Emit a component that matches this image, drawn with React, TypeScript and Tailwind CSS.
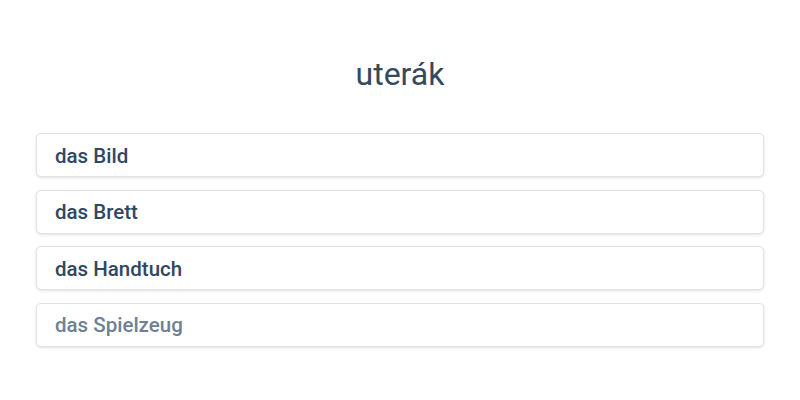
const options = ["das Bild", "das Brett", "das Handtuch", "das Spielzeug"];

export default function App() {
  return (
    <div className="w-[800px] h-[400px] bg-white font-['Roboto',sans-serif] px-9 pt-[54px]">
      <h1 className="text-center text-[32px] leading-[40px] text-[#34495e]">uterák</h1>
      <div className="mt-[39px] flex flex-col gap-[12.5px]">
        {options.map((o, i) => (
          <div
            key={o}
            className={`h-[44px] flex items-center px-[18px] pt-[2px] rounded-[5px] border border-[#e3e3e3] bg-white shadow-[0_1px_3px_rgba(0,0,0,0.12)] text-[20.5px] font-medium ${
              i === 3 ? "text-[#6e8094]" : "text-[#30475f]"
            }`}
          >
            {o}
          </div>
        ))}
      </div>
    </div>
  );
}
